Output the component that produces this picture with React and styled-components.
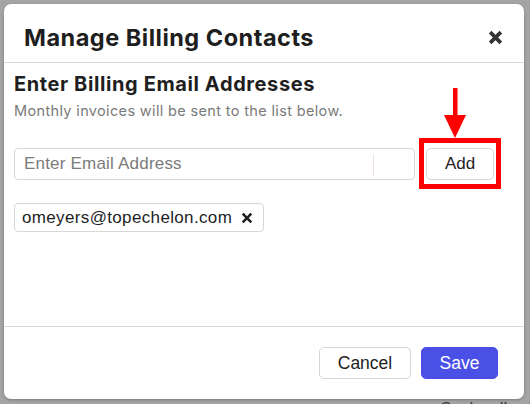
import React from "react";
import styled, { createGlobalStyle } from "styled-components";

const Global = createGlobalStyle`
  html, body { margin: 0; padding: 0; }
  body { width: 530px; height: 404px; overflow: hidden; background: #a4a4a4; }
  * { box-sizing: border-box; }
`;

const Backdrop = styled.div`
  position: relative;
  width: 530px;
  height: 404px;
  padding: 4px 6px 5px 4px;
  background: #a4a4a4;
  overflow: hidden;
`;

const BehindText = styled.div`
  position: absolute;
  left: 440px;
  top: 397px;
  font-family: "Lato", sans-serif;
  font-size: 16px;
  color: #3a3a3a;
  white-space: nowrap;
`;

const Modal = styled.div`
  position: relative;
  display: flex;
  flex-direction: column;
  width: 520px;
  height: 395px;
  background: #fff;
  border-radius: 7px;
  box-shadow: 0 1px 3px rgba(0, 0, 0, 0.25);
`;

const Header = styled.div`
  display: flex;
  align-items: center;
  justify-content: space-between;
  height: 59px;
  padding: 9px 21px 0 20px;
  border-bottom: 1px solid #d9d9d9;
`;

const Title = styled.h2`
  margin: 0;
  font-family: "Inter", sans-serif;
  font-weight: 700;
  font-size: 23.5px;
  letter-spacing: 0.5px;
  color: #1e1e1e;
`;

const Close = styled.button`
  border: none;
  background: none;
  padding: 0;
  width: 16px;
  height: 16px;
  display: flex;
  align-items: center;
  justify-content: center;
  cursor: pointer;
`;

const Body = styled.div`
  flex: 1;
  padding: 9px 10px 0 10px;
  border-bottom: 1px solid #d9d9d9;
`;

const SectionTitle = styled.h3`
  margin: 0;
  font-family: "Inter", sans-serif;
  font-weight: 700;
  font-size: 20px;
  letter-spacing: 0.6px;
  line-height: 24px;
  color: #1e1e1e;
`;

const Subtitle = styled.p`
  margin: 6px 0 0 0;
  font-family: "Inter", sans-serif;
  font-size: 14.5px;
  letter-spacing: 0.35px;
  line-height: 18px;
  color: #7a7a7a;
`;

const InputRow = styled.div`
  display: flex;
  align-items: center;
  gap: 11px;
  margin-top: 28px;
`;

const EmailField = styled.div`
  position: relative;
  width: 401px;
  height: 32px;
  border: 1px solid #d8d8d8;
  border-radius: 4px;
  display: flex;
  align-items: center;
`;

const EmailInput = styled.input`
  border: none;
  outline: none;
  background: transparent;
  width: 100%;
  height: 100%;
  padding: 0 9px;
  font-family: "Liberation Sans", Arial, sans-serif;
  font-size: 17px;
  letter-spacing: 0.2px;
  color: #333;
  &::placeholder { color: #7b7b7b; }
`;

const FieldDivider = styled.span`
  position: absolute;
  left: 358px;
  top: 5px;
  width: 1px;
  height: 21px;
  background: #f1dede;
`;

const Highlight = styled.div`
  position: relative;
`;

const RedBox = styled.div`
  position: absolute;
  left: -7px;
  right: -7px;
  top: -10px;
  bottom: -9px;
  border: 5px solid #ff0000;
  pointer-events: none;
`;

const Arrow = styled.svg`
  position: absolute;
  left: 17px;
  top: -60px;
  pointer-events: none;
`;

const Button = styled.button`
  height: 32px;
  padding: 0 ${(p) => p.$px || 16}px;
  min-width: ${(p) => p.$w || 0}px;
  border-radius: 5px;
  border: 1px solid ${(p) => (p.$primary ? "#4a4fe6" : "#d6d6d6")};
  background: ${(p) => (p.$primary ? "#4a4fe6" : "#fff")};
  color: ${(p) => (p.$primary ? "#fff" : "#222")};
  font-family: "Liberation Sans", Arial, sans-serif;
  font-size: ${(p) => p.$fs || 17.5}px;
  cursor: pointer;
`;

const Chips = styled.div`
  display: flex;
  flex-wrap: wrap;
  gap: 8px;
  margin-top: 23px;
`;

const Chip = styled.div`
  display: flex;
  align-items: center;
  gap: 9px;
  height: 29px;
  padding: 0 10px 0 7px;
  border: 1px solid #d8d8d8;
  border-radius: 4px;
  font-family: "Liberation Sans", Arial, sans-serif;
  font-size: 17px;
  letter-spacing: 0.35px;
  color: #1e1e1e;
`;

const ChipRemove = styled.span`
  display: flex;
  align-items: center;
`;

const Footer = styled.div`
  display: flex;
  justify-content: flex-end;
  align-items: center;
  gap: 10px;
  height: 72px;
  padding: 0 26px 0 0;
`;

const XIcon = ({ size = 14, stroke = 3.2, color = "#2b2b2b" }) => (
  <svg width={size} height={size} viewBox="0 0 14 14">
    <path d="M2 2 L12 12 M12 2 L2 12" stroke={color} strokeWidth={stroke} strokeLinecap="butt" />
  </svg>
);

export default function App() {
  return (
    <>
      <Global />
      <Backdrop>
        <BehindText>Card ending in</BehindText>
        <Modal>
          <Header>
            <Title>Manage Billing Contacts</Title>
            <Close aria-label="Close">
              <XIcon size={15} stroke={3.4} color="#333" />
            </Close>
          </Header>
          <Body>
            <SectionTitle>Enter Billing Email Addresses</SectionTitle>
            <Subtitle>Monthly invoices will be sent to the list below.</Subtitle>
            <InputRow>
              <EmailField>
                <EmailInput placeholder="Enter Email Address" />
                <FieldDivider />
              </EmailField>
              <Highlight>
                <Button $w={68} $px={0} $fs={17}>Add</Button>
                <RedBox />
                <Arrow width="24" height="51" viewBox="0 0 24 51">
                  <rect x="10" y="0" width="4.5" height="29" fill="#ff0000" />
                  <polygon points="1,27 23,27 12,50" fill="#ff0000" />
                </Arrow>
              </Highlight>
            </InputRow>
            <Chips>
              <Chip>
                omeyers@topechelon.com
                <ChipRemove>
                  <XIcon size={12} stroke={3} color="#1e1e1e" />
                </ChipRemove>
              </Chip>
            </Chips>
          </Body>
          <Footer>
            <Button $w={92}>Cancel</Button>
            <Button $primary $w={77}>Save</Button>
          </Footer>
        </Modal>
      </Backdrop>
    </>
  );
}
